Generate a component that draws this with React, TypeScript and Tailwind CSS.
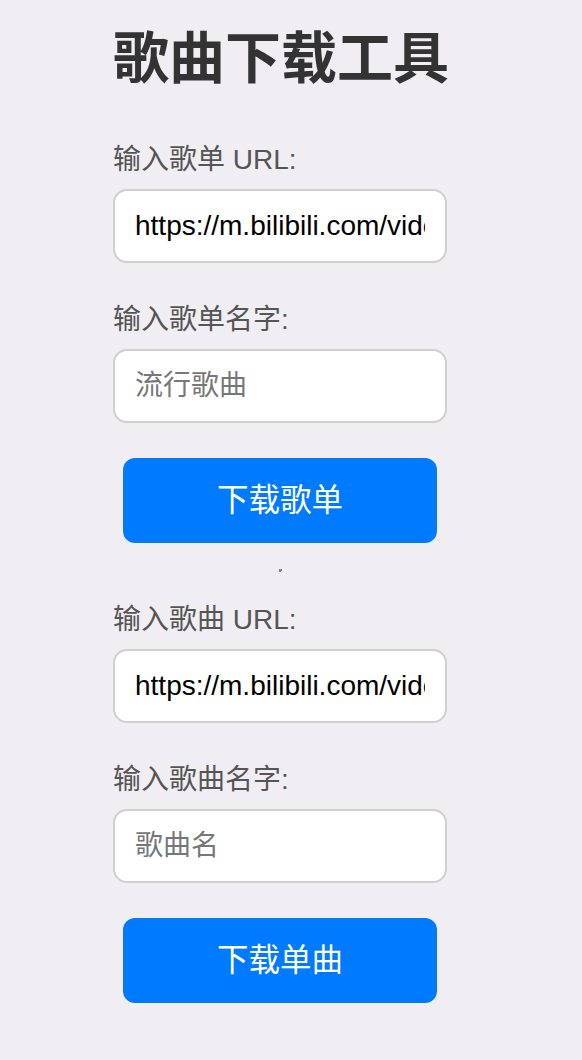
import * as React from "react";

const FONT = {
  fontFamily: '"Liberation Sans", "Noto Sans CJK SC", sans-serif',
};

function Field({
  label,
  value,
  placeholder,
  first,
}: {
  label: string;
  value?: string;
  placeholder?: string;
  first?: boolean;
}) {
  return (
    <div className={first ? "" : "mt-[43px]"}>
      <label className="block text-[28px] leading-[28px] text-[#555555]">
        {label}
      </label>
      <input
        type="text"
        defaultValue={value}
        placeholder={placeholder}
        className="mt-[15px] box-border block h-[74px] w-[334px] rounded-[14px] border-2 border-[#cfcfcf] bg-white px-[20px] text-[28px] text-black outline-none placeholder:text-[#777777]"
      />
    </div>
  );
}

function Section({
  listLabel,
  nameLabel,
  placeholder,
  button,
}: {
  listLabel: string;
  nameLabel: string;
  placeholder: string;
  button: string;
}) {
  return (
    <div>
      <Field
        first
        label={listLabel}
        value="https://m.bilibili.com/video/BV1xx411c7mD"
      />
      <Field label={nameLabel} placeholder={placeholder} />
      <div className="mt-[35px] px-[10px]">
        <button className="flex h-[85px] w-full items-center justify-center rounded-[12px] bg-[#007aff] text-[31.5px] text-white">
          {button}
        </button>
      </div>
    </div>
  );
}

export default function App() {
  return (
    <div className="min-h-screen bg-[#f0eef2]" style={FONT}>
      <div className="ml-[113px] w-[334px] pb-[60px]">
        <h1 className="whitespace-nowrap pt-[31px] text-[56px] font-bold leading-[56px] text-[#333333]">
          歌曲下载工具
        </h1>
        <div className="mt-[59px]">
          <Section
            listLabel="输入歌单 URL:"
            nameLabel="输入歌单名字:"
            placeholder="流行歌曲"
            button="下载歌单"
          />
        </div>
        <div className="mt-[26px] flex justify-center">
          <div className="h-[3px] w-[3px] border-l-2 border-t-2 border-[#8a8a8a]" />
        </div>
        <div className="mt-[34px]">
          <Section
            listLabel="输入歌曲 URL:"
            nameLabel="输入歌曲名字:"
            placeholder="歌曲名"
            button="下载单曲"
          />
        </div>
      </div>
    </div>
  );
}
